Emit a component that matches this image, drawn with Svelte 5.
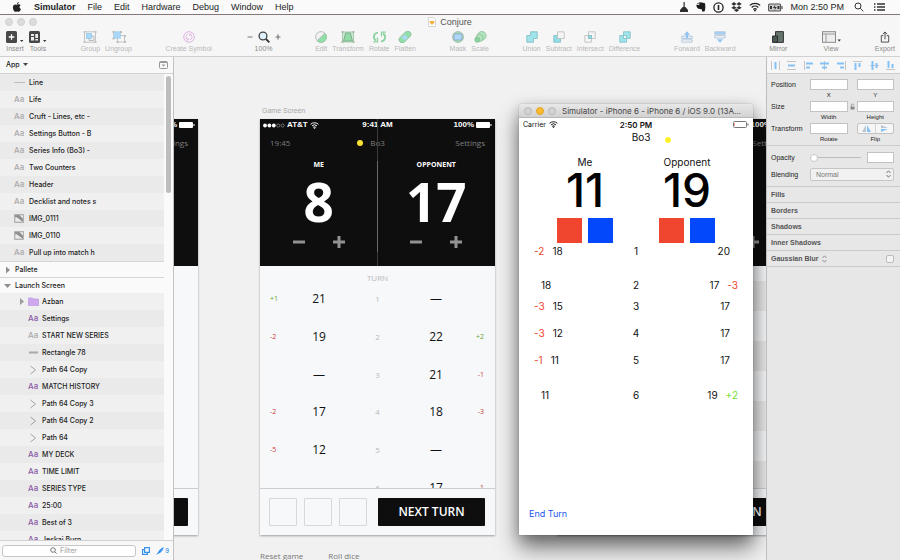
<script>
  const menus = ['File', 'Edit', 'Hardware', 'Debug', 'Window', 'Help'];

  const tools = [
    ['Insert', 'Tools'],
    ['Group', 'Ungroup'],
    ['Create Symbol'],
    ['100%'],
    ['Edit', 'Transform', 'Rotate', 'Flatten'],
    ['Mask', 'Scale'],
    ['Union', 'Subtract', 'Intersect', 'Difference'],
    ['Forward', 'Backward'],
    ['Mirror'],
    ['View'],
    ['Export']
  ];
  const dark = ['Insert', 'Tools', '100%', 'Mirror', 'View', 'Export'];

  const layers = [
    { name: 'Line', kind: 'line' },
    { name: 'Life', kind: 'text' },
    { name: 'Cruft - Lines, etc -', kind: 'text' },
    { name: 'Settings Button - B', kind: 'text' },
    { name: 'Series Info (Bo3) -', kind: 'text' },
    { name: 'Two Counters', kind: 'text' },
    { name: 'Header', kind: 'text' },
    { name: 'Decklist and notes s', kind: 'text' },
    { name: 'IMG_0111', kind: 'image' },
    { name: 'IMG_0110', kind: 'image' },
    { name: 'Pull up into match h', kind: 'text' },
    { name: 'Pallete', kind: 'closed', head: true },
    { name: 'Launch Screen', kind: 'open', head: true },
    { name: 'Azban', kind: 'folder', deep: true },
    { name: 'Settings', kind: 'text', deep: true, styled: true },
    { name: 'START NEW SERIES', kind: 'text', deep: true },
    { name: 'Rectangle 78', kind: 'bar', deep: true },
    { name: 'Path 64 Copy', kind: 'path', deep: true },
    { name: 'MATCH HISTORY', kind: 'text', deep: true, styled: true },
    { name: 'Path 64 Copy 3', kind: 'path', deep: true },
    { name: 'Path 64 Copy 2', kind: 'path', deep: true },
    { name: 'Path 64', kind: 'path', deep: true },
    { name: 'MY DECK', kind: 'text', deep: true, styled: true },
    { name: 'TIME LIMIT', kind: 'text', deep: true, styled: true },
    { name: 'SERIES TYPE', kind: 'text', deep: true, styled: true },
    { name: '25:00', kind: 'text', deep: true, styled: true },
    { name: 'Best of 3', kind: 'text', deep: true, styled: true },
    { name: 'Jeskai Burn', kind: 'text', deep: true, styled: true }
  ];

  const turns = [
    ['+1', '21', 1, '—', ''],
    ['-2', '19', 2, '22', '+2'],
    ['', '—', 3, '21', '-1'],
    ['-2', '17', 4, '18', '-3'],
    ['-5', '12', 5, '—', ''],
    ['', '—', 6, '17', '-1']
  ];

  const boards = [
    { left: -211, rows: [], next: '' },
    { left: 86, rows: turns, title: 'Game Screen', next: 'NEXT TURN', players: [['ME', 8], ['OPPONENT', 17]] },
    { left: 383, rows: [], striped: true, next: 'NEXT TURN', players: [['', ''], ['', '']] }
  ];

  const simTurns = [
    { ld: '-2', l: '18', n: 1, r: '20', rd: '', gap: 0 },
    { ld: '', l: '18', n: 2, r: '17', rd: '-3', gap: 18 },
    { ld: '-3', l: '15', n: 3, r: '17', rd: '', gap: 5 },
    { ld: '-3', l: '12', n: 4, r: '17', rd: '', gap: 11 },
    { ld: '-1', l: '11', n: 5, r: '17', rd: '', gap: 11 },
    { ld: '', l: '11', n: 6, r: '19', rd: '+2', gap: 19 }
  ];

  const sections = ['Fills', 'Borders', 'Shadows', 'Inner Shadows'];
  const sign = (d) => (d.startsWith('+') ? 'plus' : 'minus');
</script>

{#snippet wifi(w)}
  <svg width={w} height={w} viewBox="0 0 12 12" fill="none" stroke="currentColor" stroke-width="1.3">
    <path d="M.8 4.4a7.6 7.6 0 0 1 10.4 0M2.7 6.5a4.8 4.8 0 0 1 6.6 0M4.4 8.4a2.4 2.4 0 0 1 3.2 0" />
    <path d="M5 9.1 6 10.4 7 9.1z" fill="currentColor" stroke-width=".6" />
  </svg>
{/snippet}

{#snippet toolIcon(n)}
  {#if n === 'Insert'}
    <svg width="18" height="12" viewBox="0 0 18 12"><rect width="11" height="12" rx="1.5" fill="#484848" /><path d="M5.5 3.2v5.6M2.7 6h5.6" stroke="#fff" stroke-width="1.3" /><path d="M14 9h3.4l-1.700 2z" fill="#333" /></svg>
  {:else if n === 'Tools'}
    <svg width="18" height="12" viewBox="0 0 18 12"><rect width="11" height="12" rx="1.5" fill="#484848" /><path d="M2 3h3v2H2zM6.300 3H9v4H6.300zM2 6h3v3.500H2zM6.300 8H9v1.500H6.300z" fill="#eee" /><path d="M14 9h3.400l-1.700 2z" fill="#333" /></svg>
  {:else if n === 'Group'}
    <svg width="14" height="12" viewBox="0 0 14 12"><rect x="1.500" y=".8" width="11" height="10.400" fill="none" stroke="#c4c4c4" /><path d="M6 5h5v4.500H6z" fill="#eee" stroke="#bbb" /><rect x="3.500" y="2.500" width="5" height="5" fill="#a9d8f8" stroke="#8cc3ea" stroke-width=".7" /><path d="M.5 0h2v2h-2zM11.500 0h2v2h-2zM.5 10h2v2h-2zM11.500 10h2v2h-2z" fill="#c4c4c4" /></svg>
  {:else if n === 'Ungroup'}
    <svg width="14" height="12" viewBox="0 0 14 12"><rect x="5.500" y="4.500" width="7" height="6.500" fill="none" stroke="#c4c4c4" /><rect x="1.500" y=".8" width="7" height="6.400" fill="#a9d8f8" stroke="#9fcbe8" stroke-width=".7" /><path d="M.5 0h2v2h-2zM8 0h2v2H8zM.5 6.500h2v2h-2zM12 4h2v2h-2zM4.500 10h2v2h-2zM12 10h2v2h-2z" fill="#bcbcbc" /></svg>
  {:else if n === 'Create Symbol'}
    <svg width="12" height="12" viewBox="0 0 12 12" fill="none" stroke="#dfb2e2"><circle cx="6" cy="6" r="5.300" /><path d="M5 3.200a3 3 0 0 0-1 5l1 .6M7 8.800a3 3 0 0 0 1-5l-1-.6M5.200 7v2H3.500M6.800 5V3h1.700" stroke-width=".9" /></svg>
  {:else if n === '100%'}
    <svg width="36" height="12" viewBox="0 0 36 12" fill="none" stroke="#777"><path d="M1.500 6h5M29.500 6h5M32 3.500v5" stroke-width="1.200" /><circle cx="17" cy="5" r="3.900" fill="#dff1fa" stroke="#444" stroke-width="1.300" /><path d="m20 8 3.300 3.300" stroke="#333" stroke-width="1.800" /></svg>
  {:else if n === 'Edit'}
    <svg width="12" height="12" viewBox="0 0 12 12"><circle cx="6" cy="6" r="5.400" fill="#f2f2f2" stroke="#bdbdbd" /><path d="M10 2.200A5.400 5.400 0 1 1 2 9.700z" fill="#8fdfa6" stroke="#8bbf99" stroke-width=".5" /><path d="m2 10 8-8" stroke="#bbb" /></svg>
  {:else if n === 'Transform'}
    <svg width="14" height="12" viewBox="0 0 14 12"><rect x="1.500" y="1" width="11" height="10" fill="#cfe9d5" stroke="#aacbb2" /><path d="M4.700 2h4.600l2.200 8h-9z" fill="#93dca8" stroke="#80ad8b" /><path d="M.5 0h2v2h-2zM11.500 0h2v2h-2zM.5 10h2v2h-2zM11.500 10h2v2h-2z" fill="#a7bfac" /></svg>
  {:else if n === 'Rotate'}
    <svg width="15" height="12" viewBox="0 0 15 12" fill="none" stroke="#8ed3a1" stroke-width="1.800"><path d="M6 1.600C1.500 2 .4 7 4 9.800M9 10.400c4.500-.4 5.600-5.400 2-8.200" /><path d="M5.500 6.500v4.300H1.200M9.500 5.500V1.200h4.300" stroke-width="1.300" /></svg>
  {:else if n === 'Flatten'}
    <svg width="14" height="12" viewBox="0 0 14 12"><rect x="0" y="2.800" width="14" height="6.400" rx="3" transform="rotate(-45 7 6)" fill="#8fdfa6" stroke="#94b99e" stroke-width=".8" /><path d="m3.500 6.500 3-3 3.500 3-3 3z" fill="#a9d8f4" /></svg>
  {:else if n === 'Mask'}
    <svg width="12" height="12" viewBox="0 0 12 12"><circle cx="6" cy="6" r="5.400" fill="#a6dcb4" stroke="#a9c0af" /><rect x="2" y="3" width="8" height="6" fill="#b0d6f8" stroke="#88a9c4" stroke-width=".8" /></svg>
  {:else if n === 'Scale'}
    <svg width="13" height="12" viewBox="0 0 13 12" fill="#b2e6bf" stroke="#8dba99" stroke-width=".8"><circle cx="7.800" cy="4.800" r="4.300" /><circle cx="5.400" cy="7" r="3.600" /><circle cx="3.300" cy="8.800" r="2.500" fill="#84d69c" /></svg>
  {:else if n === 'Union'}
    <svg width="12" height="12" viewBox="0 0 12 12"><path d="M4.500.8h6.700v6.700H7.500v3.700H.8V4.500h3.700z" fill="#9fe4ea" stroke="#86bfc5" stroke-width=".9" /></svg>
  {:else if n === 'Subtract'}
    <svg width="12" height="12" viewBox="0 0 12 12"><path d="M.8 4.500h3.700v3h3v3.700H.8z" fill="#8fdfe6" stroke="#86bfc5" stroke-width=".9" /><path d="M4.500.8h6.700v6.700H4.500z" fill="#f4f4f4" stroke="#c2c2c2" stroke-width=".9" /></svg>
  {:else if n === 'Intersect'}
    <svg width="12" height="12" viewBox="0 0 12 12" stroke="#c2c2c2" stroke-width=".9"><path d="M4.500.8h6.700v6.700H4.500zM.8 4.500h6.700v6.700H.8z" fill="#f4f4f4" /><path d="M4.500 4.500h3v3h-3z" fill="#8fdfe6" stroke="#86bfc5" /></svg>
  {:else if n === 'Difference'}
    <svg width="12" height="12" viewBox="0 0 12 12" stroke="#86c5ca" stroke-width=".9"><path d="M4.500.8h6.700v6.700H4.500zM.8 4.500h6.700v6.700H.8z" fill="#9fe4ea" /><path d="M4.500 4.500h3v3h-3z" fill="#f4f4f4" /></svg>
  {:else if n === 'Forward'}
    <svg width="12" height="12" viewBox="0 0 12 12"><path d="M.8 8.800h10.400v2.400H.8z" fill="#f2f2f2" stroke="#a9c2da" stroke-width=".8" /><path d="M.8 5h10.400v2.500H.8z" fill="#e5f0fa" stroke="#a9c2da" stroke-width=".8" /><path d="M6 .3 9 3.800H7V7H5V3.800H3z" fill="#8fc3f4" /></svg>
  {:else if n === 'Backward'}
    <svg width="12" height="12" viewBox="0 0 12 12"><path d="M.8.8h10.400v2.400H.8z" fill="#a9d2f8" stroke="#a9c2da" stroke-width=".8" /><path d="M.8 4.500h10.400V7H.8z" fill="#f2f2f2" stroke="#a9c2da" stroke-width=".8" /><path d="M3 8.300h6L6 11.800z" fill="#8fc3f4" /></svg>
  {:else if n === 'Mirror'}
    <svg width="12" height="12" viewBox="0 0 12 12"><path d="M3.500.6h7.900v10.800H3.500z" fill="#65756c" stroke="#333" /><path d="M.6 5h5v6.400h-5z" fill="#4c5851" stroke="#2c2c2c" /></svg>
  {:else if n === 'View'}
    <svg width="20" height="12" viewBox="0 0 20 12"><rect x="1.500" y=".7" width="13" height="10.600" fill="#eee" stroke="#8a8a8a" /><path d="M1.500 3h13M5 3v8" stroke="#9a9a9a" /><path d="M16.500 8.500h3.400l-1.700 2z" fill="#333" /></svg>
  {:else}
    <svg width="10" height="13" viewBox="0 0 10 13" fill="none" stroke="#444"><path d="M3.200 5H1v7h8V5H6.800M5 9V1.200M2.800 3.400 5 1l2.200 2.400" /></svg>
  {/if}
{/snippet}

{#snippet layerIcon(l)}
  {#if l.kind === 'text'}
    <span class="aa" class:styled={l.styled}>Aa</span>
  {:else if l.kind === 'line'}
    <svg width="11" height="9"><path d="M0 4.500h11" stroke="#bcbcbc" /></svg>
  {:else if l.kind === 'bar'}
    <svg width="10" height="9"><path d="M1 4.500h9" stroke="#a8a8a8" stroke-width="2" /></svg>
  {:else if l.kind === 'image'}
    <svg width="10" height="9" viewBox="0 0 10 9"><rect x=".7" y=".7" width="8.600" height="7.600" fill="#8f8f8f" stroke="#a8a8a8" /><path d="M1.200 7.800V3.500C3 2.500 5 5.500 9 7.800zM5.500 1.200H9v3.300z" fill="#ececec" /></svg>
  {:else if l.kind === 'path'}
    <svg width="10" height="10" viewBox="0 0 10 10"><path d="m2.500 1 5 4-5 4" fill="none" stroke="#a2a2a2" /></svg>
  {:else if l.kind === 'folder'}
    <svg width="19" height="9" viewBox="0 0 19 9"><path d="m0 1 4 3.500-4 3.500z" fill="#9c9c9c" /><path d="M8.500 1h4l1 1h5v6.500h-10z" fill="#cda8ee" stroke="#bd97e2" stroke-width=".7" /></svg>
  {:else if l.kind === 'closed'}
    <svg width="8" height="8"><path d="m2 .5 4 3.500-4 3.500z" fill="#8f8f8f" /></svg>
  {:else}
    <svg width="8" height="8"><path d="M0 2h7L3.500 6z" fill="#8f8f8f" /></svg>
  {/if}
{/snippet}

<div class="screen">
  <header class="menubar">
    <svg class="apple" width="10" height="10" viewBox="0 0 20 22"><path d="M14 0c.2 2-1.600 4.500-4 4.500C9.800 2.400 11.800.3 14 0zM10 6c1 0 2-.9 4-.9 1.600 0 3 .8 3.900 2-3.600 2.200-3 7 .9 8.500C17.700 18.500 16 21.500 14 21.500c-1.400 0-2-.8-3.700-.8s-2.300.8-3.600.8C4 21.500 1 16.500 1 12c0-4.300 2.500-6.700 5.200-6.700C8 5.300 9 6 10 6z" fill="#222" /></svg>
    <nav>
      <button class="strong">Simulator</button>
      {#each menus as m}<button>{m}</button>{/each}
    </nav>
    <div class="extras">
      <svg width="10" height="10" viewBox="0 0 10 10"><path d="M4.500 0h1.200v5H6.500l2.500 3v2H1V8l2.700-3h.8z" fill="#2c2c2c" /></svg>
      <svg width="10" height="10" viewBox="0 0 10 10"><path d="M3.200.2 6 .4l3 .8c.6 3 .4 7-.6 8.300H6V7.500L4 7C1.500 7 .4 5 .3 3h3z" fill="#1c1c1c" /><path d="M.5 2.300 2.500.4v1.900z" fill="#1c1c1c" /></svg>
      <svg width="11" height="11" viewBox="0 0 11 11"><circle cx="5.500" cy="5.500" r="4.600" fill="none" stroke="#222" stroke-width="1.300" /><path d="M4.700 3h1.600v5H4.700z" fill="#222" /></svg>
      <svg width="11" height="10" viewBox="0 0 11 10"><path d="M3 0 .3 2 3 3.800 5.500 2zM8 0 5.500 2 8 3.800 10.700 2zM3 3.900.3 5.700 3 7.500l2.500-1.800zM8 3.900 5.500 5.700 8 7.500l2.700-1.800zM5.500 6.500 3 8.300 5.500 10 8 8.300z" fill="#333" /></svg>
      {@render wifi(12)}
      <svg width="15" height="9" viewBox="0 0 15 9"><rect x=".6" y="1" width="12" height="7" rx="1" fill="#ccc" stroke="#555" stroke-width="1.100" /><path d="M14 3v3" stroke="#555" stroke-width="1.200" /><path d="M2 3h2v3H2zM9.500 3h2v3h-2zM7.500 1.500 5 5h2l-.8 2.800L8.800 4H6.800z" fill="#333" /></svg>
      <time>Mon 2:50 PM</time>
      <svg class="find" width="10" height="10" viewBox="0 0 10 10" fill="none" stroke="#333"><circle cx="4" cy="4" r="3" /><path d="m6.300 6.300 3 3" /></svg>
      <svg width="12" height="8" viewBox="0 0 12 8"><path d="M0 1h1.500M3 1h8M0 4h1.500M3 4h8M0 7h1.500M3 7h8" stroke="#333" stroke-width="1.300" /></svg>
    </div>
  </header>

  <div class="titlebar">
    <div class="lights"><i></i><i></i><i></i></div>
    <h1>
      <svg width="8" height="10" viewBox="0 0 8 10"><path d="M.5.5h5l2 2v7h-7z" fill="#fff" stroke="#ccc" stroke-width=".8" /><path d="M2 4h4l.6 1.200L4 8 1.400 5.200z" fill="#f6ad45" /></svg>
      Conjure
    </h1>
  </div>

  <div class="toolbar">
    {#each tools as group}
      <div class="group">
        {#each group as t}
          <button class:dark={dark.includes(t)}>{@render toolIcon(t)}<span>{t}</span></button>
        {/each}
      </div>
    {/each}
  </div>

  <div class="work">
    <aside class="layers">
      <div class="page">
        <button>App <svg width="6" height="4"><path d="M0 0h5L2.500 3z" fill="#444" /></svg></button>
        <svg width="9" height="8" viewBox="0 0 9 8"><rect x=".5" y=".5" width="8" height="7" rx="1" fill="none" stroke="#999" /><path d="M1 1.500h7" stroke="#999" /><path d="M2.700 3.500h3.600L4.500 5.700z" fill="#999" /></svg>
      </div>
      <div class="list">
        <ul>
          {#each layers as l}
            <li class:head={l.head} class:deep={l.deep} class:folder={l.kind === 'folder'}>
              <span class="ico">{@render layerIcon(l)}</span>{l.name}
            </li>
          {/each}
        </ul>
        <div class="track"><div class="thumb"></div></div>
      </div>
      <div class="filter">
        <label>
          <svg width="7" height="7" viewBox="0 0 7 7" fill="none" stroke="#777"><circle cx="3" cy="3" r="2.300" /><path d="m4.700 4.700 2 2" /></svg>
          <input type="text" placeholder="Filter" aria-label="Filter" />
        </label>
        <svg width="8" height="8" viewBox="0 0 8 8" fill="none" stroke="#3a94ee" stroke-width="1.200"><path d="M2.600.6h4.800v4.800H2.600zM2.600 2.600h-2v4.800h4.800v-2" /></svg>
        <span class="slices"><svg width="8" height="8" viewBox="0 0 8 8"><path d="M7.800 0C5 1 3 3 2.200 5L0 7.800 4 6C6 4.500 7.300 2.500 7.800 0z" fill="#3a94ee" /></svg>9</span>
      </div>
    </aside>

    <main class="canvas">
      {#each boards as b}
        <section class="board" style:left="{b.left}px">
          {#if b.title}<span class="caption">{b.title}</span>{/if}
          <div class="top">
            <div class="status">
              <span class="carrier">
                {#if b.title}
                  <svg width="22" height="5" viewBox="0 0 22 5" fill="#fff"><circle cx="2" cy="2.500" r="1.900" /><circle cx="6.400" cy="2.500" r="1.900" /><circle cx="10.800" cy="2.500" r="1.900" /><g fill="none" stroke="#aaa" stroke-width=".6"><circle cx="15.200" cy="2.500" r="1.600" /><circle cx="19.600" cy="2.500" r="1.600" /></g></svg>
                  AT&amp;T {@render wifi(9)}
                {/if}
              </span>
              <span>{b.title ? '9:41 AM' : ''}</span>
              <span class="power">100% <svg width="16" height="6"><rect width="14" height="6" rx="1" fill="#fff" /><path d="M15 2v2" stroke="#fff" /></svg></span>
            </div>
            <div class="info">
              <span>{b.title ? '19:45' : ''}</span>
              <span class="series">{#if b.title}<i></i>Bo3{/if}</span>
              <span>Settings</span>
            </div>
            {#if b.players}
              <div class="players">
                {#each b.players as [who, life]}
                  <div>
                    <h2>{who}</h2>
                    <strong>{life}</strong>
                    <p>
                      <button aria-label="Decrease"><svg width="14" height="14"><path d="M1 7h12" stroke="#929292" stroke-width="3" /></svg></button>
                      <button aria-label="Increase"><svg width="14" height="14"><path d="M1 7h12M7 1v12" stroke="#929292" stroke-width="3" /></svg></button>
                    </p>
                  </div>
                {/each}
              </div>
            {/if}
          </div>
          <div class="history" class:striped={b.striped}>
            {#if b.rows.length}
              <h3>TURN</h3>
              <ol>
                {#each b.rows as [ld, l, n, r, rd]}
                  <li>
                    <span class="delta {sign(ld)}">{ld}</span><b>{l}</b><span class="num">{n}</span><b>{r}</b><span class="delta end {sign(rd)}">{rd}</span>
                  </li>
                {/each}
              </ol>
            {/if}
          </div>
          <div class="foot"><i></i><i></i><i></i><button aria-label="Next turn">{b.next}</button></div>
          {#if b.title}<div class="notes"><span>Reset game</span><span>Roll dice</span></div>{/if}
        </section>
      {/each}

      <section class="sim">
        <div class="simbar"><i></i><i class="min"></i><i></i><span>Simulator - iPhone 6 - iPhone 6 / iOS 9.0 (13A...</span></div>
        <div class="simstatus">
          <span>Carrier {@render wifi(9)}</span><b>2:50 PM</b>
          <span class="right"><svg width="16" height="7" viewBox="0 0 16 7"><rect x=".5" y=".5" width="13" height="6" rx="1" fill="none" stroke="#777" /><path d="M15 2.500v2" stroke="#666" /><path d="M1.500 2v3" stroke="#f5523c" stroke-width=".6" /></svg></span>
        </div>
        <div class="simseries"><span></span><span>Bo3</span><i></i></div>
        <div class="simplayers">
          {#each [['Me', 11], ['Opponent', 19]] as [who, life]}
            <div>
              <h2>{who}</h2>
              <strong>{life}</strong>
              <p><button class="red" aria-label="Subtract life"></button><button class="blue" aria-label="Add life"></button></p>
            </div>
          {/each}
        </div>
        <ol>
          {#each simTurns as t}
            <li style:margin-top="{t.gap}px">
              <span class="left" class:lone={!t.ld}>{#if t.ld}<em class={sign(t.ld)}>{t.ld}</em>{/if}{t.l}</span>
              <span>{t.n}</span>
              <span class="right" class:lone={!t.rd}>{t.r}{#if t.rd}<em class={sign(t.rd)}>{t.rd}</em>{/if}</span>
            </li>
          {/each}
        </ol>
        <button class="endturn">End Turn</button>
      </section>
    </main>

    <aside class="inspector">
      <div class="align">
        <svg width="9" height="9"><path d="M.5 0v9M8.500 0v9" stroke="#c4c4c4" /><path d="M4.500 1v7" stroke="#84c1f5" stroke-width="2" /></svg>
        <svg width="9" height="9"><path d="M0 .5h9M0 8.500h9" stroke="#c4c4c4" /><path d="M1 4.500h7" stroke="#84c1f5" stroke-width="2" /></svg>
        <svg width="9" height="9"><path d="M.5 0v9" stroke="#c4c4c4" /><path d="M2 2.500h7M2 6.500h4" stroke="#84c1f5" stroke-width="2" /></svg>
        <svg width="9" height="9"><path d="M4.500 0v9" stroke="#c4c4c4" /><path d="M0 2.500h9M2 6.500h5" stroke="#84c1f5" stroke-width="2" /></svg>
        <svg width="9" height="9"><path d="M8.500 0v9" stroke="#c4c4c4" /><path d="M0 2.500h7M3 6.500h4" stroke="#84c1f5" stroke-width="2" /></svg>
        <svg width="9" height="9"><path d="M0 .5h9" stroke="#c4c4c4" /><path d="M2.500 2v7M6.500 2v4" stroke="#84c1f5" stroke-width="2" /></svg>
        <svg width="9" height="9"><path d="M0 4.500h9" stroke="#c4c4c4" /><path d="M2.500 0v9M6.500 2v5" stroke="#84c1f5" stroke-width="2" /></svg>
        <svg width="9" height="9"><path d="M0 8.500h9" stroke="#c4c4c4" /><path d="M2.500 0v7M6.500 3v4" stroke="#84c1f5" stroke-width="2" /></svg>
      </div>
      <div class="props">
        <span class="name">Position</span>
        <label><input type="text" />X</label>
        <span></span>
        <label><input type="text" />Y</label>
        <span class="name">Size</span>
        <label><input type="text" />Width</label>
        <svg width="5" height="11" viewBox="0 0 5 11"><path d="M1.300 5.500V4.200a1.200 1.200 0 0 1 2.400 0" fill="none" stroke="#888" stroke-width=".8" /><path d="M.5 5.500h4V8.500h-4z" fill="#888" /></svg>
        <label><input type="text" />Height</label>
        <span class="name">Transform</span>
        <label><input type="text" />Rotate</label>
        <span></span>
        <div class="flip">
          <div>
            <button aria-label="Flip horizontal"><svg width="9" height="7"><path d="M4 0v7H0z" fill="#b9c7d3" /><path d="M5 0v7h4z" fill="#84c1f5" /></svg></button>
            <button aria-label="Flip vertical"><svg width="9" height="7"><path d="M1 0v3h7z" fill="#b9c7d3" /><path d="M1 7V4h7z" fill="#84c1f5" /></svg></button>
          </div>
          Flip
        </div>
      </div>
      <div class="look">
        <label for="opacity">Opacity</label>
        <div class="slide"><input id="opacity" type="range" value="0" /><input type="text" aria-label="Opacity value" /></div>
        <label for="blend">Blending</label>
        <div class="pick">
          <select id="blend"><option>Normal</option></select>
          <svg width="5" height="8" viewBox="0 0 5 8" fill="none" stroke="#666" stroke-width=".9"><path d="M.5 3 2.500.8 4.500 3M.5 5l2 2.200L4.500 5" /></svg>
        </div>
      </div>
      {#each sections as s}<h4>{s}</h4>{/each}
      <h4>
        <label for="blur">Gaussian Blur</label>
        <svg width="5" height="8" viewBox="0 0 5 8" fill="none" stroke="#888" stroke-width=".9"><path d="M.5 3 2.500.8 4.500 3M.5 5l2 2.200L4.500 5" /></svg>
        <input id="blur" type="checkbox" />
      </h4>
    </aside>
  </div>
</div>

<style>
  :global(body) { margin: 0; background: #f1f1f1; }
  * { box-sizing: border-box; }
  .screen { height: 100vh; display: flex; flex-direction: column; overflow: hidden; font-family: "Liberation Sans", Arial, sans-serif; font-size: 7px; line-height: 10px; color: #222; }
  button { appearance: none; border: 0; background: none; padding: 0; margin: 0; font: inherit; color: inherit; white-space: nowrap; }
  input, select { font: inherit; margin: 0; padding: 0; min-width: 0; border: 0; outline: 0; appearance: none; }
  ul, ol, p, h1, h2, h3, h4 { margin: 0; padding: 0; list-style: none; font-size: inherit; font-weight: inherit; }
  svg { display: block; flex: none; }

  .menubar { display: flex; align-items: center; height: 15px; flex: none; padding: 0 14px 0 12px; background: #fafafa; border-bottom: 1px solid #85767a; font-size: 9px; }
  nav { display: flex; gap: 12px; margin-left: 12px; }
  .strong { font-weight: bold; }
  .extras { display: flex; align-items: center; gap: 7px; margin-left: auto; }
  .extras .find { margin: 0 3px; }

  .titlebar { position: relative; display: flex; align-items: center; justify-content: center; height: 14px; flex: none; background: #f6f6f6; color: #555; }
  .lights { position: absolute; left: 5px; display: flex; gap: 4px; }
  .lights i { width: 8px; height: 8px; border-radius: 50%; background: #dcdcdc; border: 1px solid #d0d0d0; }
  h1 { display: flex; align-items: center; gap: 4px; font-size: 9px; }

  .toolbar { display: flex; justify-content: space-between; height: 28px; flex: none; padding: 2px 5px 0 6px; background: #f6f6f6; border-bottom: 1px solid #d0d0d0; color: #b9b9b9; }
  .group { display: flex; gap: 5px; }
  .group button { display: flex; flex-direction: column; align-items: center; gap: 1px; }
  .group button > :global(svg) { height: 12px; }
  .dark { color: #8c8c8c; }

  .work { flex: 1; min-height: 0; display: flex; }

  .layers { width: 174px; flex: none; display: flex; flex-direction: column; border-right: 1px solid #c2c2c2; font-family: Inter, "Liberation Sans", sans-serif; font-weight: 500; background: #f8f8f8; }
  .page { display: flex; align-items: center; justify-content: space-between; height: 17px; padding: 0 5px 0 6px; border-bottom: 1px solid #d2d2d2; }
  .page button { display: flex; align-items: center; gap: 3px; }
  .list { flex: 1; min-height: 0; display: flex; overflow: hidden; }
  .list ul { flex: 1; }
  .list li { display: flex; align-items: center; height: 17px; padding-left: 14px; background: #f0f0f0; white-space: nowrap; }
  .list li:nth-child(odd) { background: #eaeaea; }
  .list li.deep { padding-left: 28px; }
  .list li.folder { padding-left: 20px; }
  .list li.head { height: 16px; padding-left: 4px; background: #fafafa; border-top: 1px solid #d6d6d6; }
  .ico { width: 15px; flex: none; }
  .deep .ico { width: 14px; }
  .folder .ico { width: 22px; }
  .head .ico { width: 11px; }
  .aa { font-size: 8px; color: #a9a9a9; }
  .aa.styled { color: #8a5aa6; }
  .track { width: 9px; padding: 2px 2px 0; background: #fafafa; }
  .thumb { width: 5px; height: 117px; border-radius: 3px; background: #bdbdbd; }
  .filter { display: flex; align-items: center; height: 20px; flex: none; gap: 6px; padding: 0 4px 0 2px; border-top: 1px solid #d0d0d0; color: #3a94ee; }
  .filter label { flex: 1; display: flex; align-items: center; justify-content: center; gap: 3px; height: 12px; border: 1px solid #c6c6c6; border-radius: 3px; background: #fff; }
  .filter input { width: 28px; height: 10px; background: none; }
  .filter input::placeholder { color: #aaa; }
  .slices { display: flex; align-items: center; gap: 1px; font-size: 6px; }

  .canvas { flex: 1; min-width: 0; position: relative; overflow: hidden; background: #f1f1f1; }
  .board { position: absolute; top: 62px; width: 235px; height: 416px; display: flex; flex-direction: column; background: #f6f8fa; box-shadow: 0 1px 2px rgba(0, 0, 0, .35); font-family: "Open Sans", "Noto Sans", sans-serif; }
  .caption { position: absolute; left: 2px; top: -13px; font-family: "Liberation Sans", Arial, sans-serif; color: #a8a8a8; }
  .top { position: relative; height: 147px; flex: none; background: #0e0e0e; color: #fff; }
  .top::before { content: ""; position: absolute; left: 117px; top: 0; width: 1px; height: 100%; background: #3a3a3a; }
  .top::after { content: ""; position: absolute; left: 117px; top: 42px; width: 1px; height: 91px; background: #686868; }
  .status { display: grid; grid-template-columns: 1fr auto 1fr; align-items: center; height: 12px; padding: 0 3px; font: bold 8px/12px "Liberation Sans", Arial, sans-serif; }
  .carrier, .power { display: flex; align-items: center; gap: 2px; }
  .power { justify-content: flex-end; }
  .info { display: grid; grid-template-columns: 1fr auto 1fr; align-items: center; height: 24px; padding: 0 10px; font-size: 8px; color: #7e7e7e; }
  .info > :last-child { text-align: right; }
  .series { display: flex; align-items: center; gap: 7px; }
  .series i { width: 6px; height: 6px; margin-left: -13px; border-radius: 50%; background: #fae232; }
  .players { display: flex; text-align: center; }
  .players > div { flex: 1; }
  .players h2 { height: 20px; font-weight: 700; line-height: 20px; }
  .players strong { display: block; height: 54px; font-size: 53px; line-height: 54px; font-weight: 700; }
  .players p { display: flex; justify-content: center; gap: 26px; padding-top: 6px; }
  .history { flex: 1; min-height: 0; display: flex; flex-direction: column; overflow: hidden; }
  .striped { background: repeating-linear-gradient(#e9e9e9 0 30px, #f6f8fa 30px 60px) 0 15px no-repeat; }
  .history h3 { text-align: center; font-size: 8px; line-height: 24px; height: 24px; flex: none; color: #bababa; }
  .history ol { flex: 1; display: flex; flex-direction: column; justify-content: space-between; margin-bottom: -9px; }
  .history li { display: grid; grid-template-columns: 29px 60px 57px 60px 29px; align-items: center; height: 18px; text-align: center; }
  .history b { font-size: 12px; font-weight: 400; color: #111; }
  .num { font-size: 8px; color: #bababa; }
  .delta { padding-left: 10px; text-align: left; }
  .delta.end { padding: 0 11px 0 0; text-align: right; }
  .delta.plus { color: #6aa52a; }
  .delta.minus { color: #cc3a36; }
  .foot { display: flex; align-items: center; gap: 7px; height: 47px; flex: none; padding: 0 10px 0 9px; border-top: 1px solid #ccced2; }
  .foot i { width: 28px; height: 28px; border: 1px solid #d6d8da; border-radius: 1px; }
  .foot button { flex: 1; height: 28px; margin-left: 4px; border-radius: 1px; background: #0e0e0e; color: #fff; font-size: 12px; font-weight: 600; }
  .notes { position: absolute; top: 432px; display: flex; gap: 25px; font-size: 8px; color: #777; white-space: nowrap; }

  .sim { position: absolute; left: 345px; top: 47px; width: 234px; height: 431px; display: flex; flex-direction: column; background: #fff; border-radius: 3px 3px 0 0; box-shadow: 0 0 1px rgba(0, 0, 0, .5), 0 4px 14px rgba(0, 0, 0, .2), 0 13px 22px rgba(0, 0, 0, .5); font-family: Inter, "Liberation Sans", sans-serif; color: #111; font-size: 10px; }
  .simbar { display: flex; align-items: center; gap: 4px; height: 14px; flex: none; padding: 0 4px 0 5px; border-radius: 3px 3px 0 0; background: linear-gradient(#e8e8e8, #d2d2d2); border-bottom: 1px solid #b8b8b8; font-size: 8px; color: #444; white-space: nowrap; }
  .simbar i { width: 8px; height: 8px; border-radius: 50%; background: #d2d2d2; border: 1px solid #bcbcbc; flex: none; }
  .simbar .min { background: #fdbc2e; border-color: #e5a32a; }
  .simbar span { margin-left: 2px; }
  .simstatus { display: grid; grid-template-columns: 1fr auto 1fr; align-items: center; height: 13px; padding: 0 4px; font-size: 7px; }
  .simstatus span { display: flex; align-items: center; gap: 3px; }
  .simstatus .right { justify-content: flex-end; }
  .simstatus b { font-size: 8px; font-weight: 600; }
  .simseries { display: grid; grid-template-columns: 1fr auto 1fr; height: 12px; line-height: 12px; padding-left: 10px; }
  .simseries i { width: 6px; height: 6px; margin: 6px 0 0 15px; border-radius: 50%; background: #fdf12c; }
  .simplayers { display: flex; justify-content: center; margin-top: 9px; text-align: center; }
  .simplayers > div { width: 102px; }
  .simplayers h2 { line-height: 20px; }
  .simplayers strong { display: block; font-size: 46px; line-height: 37px; font-weight: 500; color: #000; }
  .simplayers p { display: flex; justify-content: center; gap: 6px; margin-top: 9px; }
  .simplayers button { width: 25px; height: 25px; }
  .red { background: #f0452f; }
  .blue { background: #0348fb; }
  .sim li { display: grid; grid-template-columns: 1fr auto 1fr; height: 16px; line-height: 16px; padding: 0 15px; }
  .sim li span { display: flex; gap: 8px; }
  .sim li .left.lone { padding-left: 7px; }
  .sim li .right { justify-content: flex-end; }
  .sim li .right.lone { padding-right: 8px; }
  .sim em { font-style: normal; }
  .sim em.minus { color: #f0452f; }
  .sim em.plus { color: #6fe02c; }
  .endturn { align-self: flex-start; margin: auto 0 16px 10px; font-size: 9px; color: #1c56f0; }

  .inspector { width: 134px; flex: none; border-left: 1px solid #bdbdbd; background: #e7e7e7; }
  .align { display: flex; align-items: center; justify-content: space-between; height: 17px; padding: 0 5px 0 4px; background: #f6f6f6; border-bottom: 1px solid #cfcfcf; }
  .inspector input[type="text"] { display: block; width: 100%; height: 11px; border: 1px solid #c2c2c2; background: #fff; }
  .props { display: grid; grid-template-columns: 39px 1fr 9px 1fr; padding: 5px 6px 0 4px; text-align: center; font-size: 6px; }
  .props > svg { justify-self: center; }
  .name { text-align: left; font-size: 7px; line-height: 12px; }
  .props label, .flip { display: block; line-height: 11px; height: 22px; }
  .flip div { display: flex; height: 11px; border: 1px solid #c2c2c2; border-radius: 2px; background: #f6f6f6; }
  .flip button { flex: 1; display: grid; place-items: center; }
  .flip button + button { border-left: 1px solid #d6d6d6; }
  .look { display: grid; grid-template-columns: 39px 1fr; align-items: center; row-gap: 5px; padding: 6px 6px 5px 4px; border-top: 1px solid #cbcbcb; }
  .slide { display: grid; grid-template-columns: 1fr 27px; align-items: center; gap: 6px; }
  .slide input[type="range"] { width: 100%; height: 8px; background: linear-gradient(#bbb, #bbb) center / 100% 1px no-repeat; }
  .slide input[type="range"]::-webkit-slider-thumb { appearance: none; width: 8px; height: 8px; border-radius: 50%; background: #fff; border: 1px solid #c8c8c8; }
  .pick { position: relative; }
  .pick select { display: block; width: 100%; height: 13px; padding: 0 5px; border: 1px solid #c6c6c6; border-radius: 2px; background: #f1f1f1; color: #777; }
  .pick svg { position: absolute; right: 3px; top: 2px; }
  h4 { display: flex; align-items: center; gap: 4px; height: 16px; padding: 0 6px 0 4px; border-top: 1px solid #cbcbcb; font-weight: bold; color: #555; }
  h4:last-child { height: 17px; border-bottom: 1px solid #cbcbcb; }
  h4 input { width: 8px; height: 8px; margin-left: auto; border: 1px solid #bcbcbc; border-radius: 2px; background: #f4f4f4; }
</style>
